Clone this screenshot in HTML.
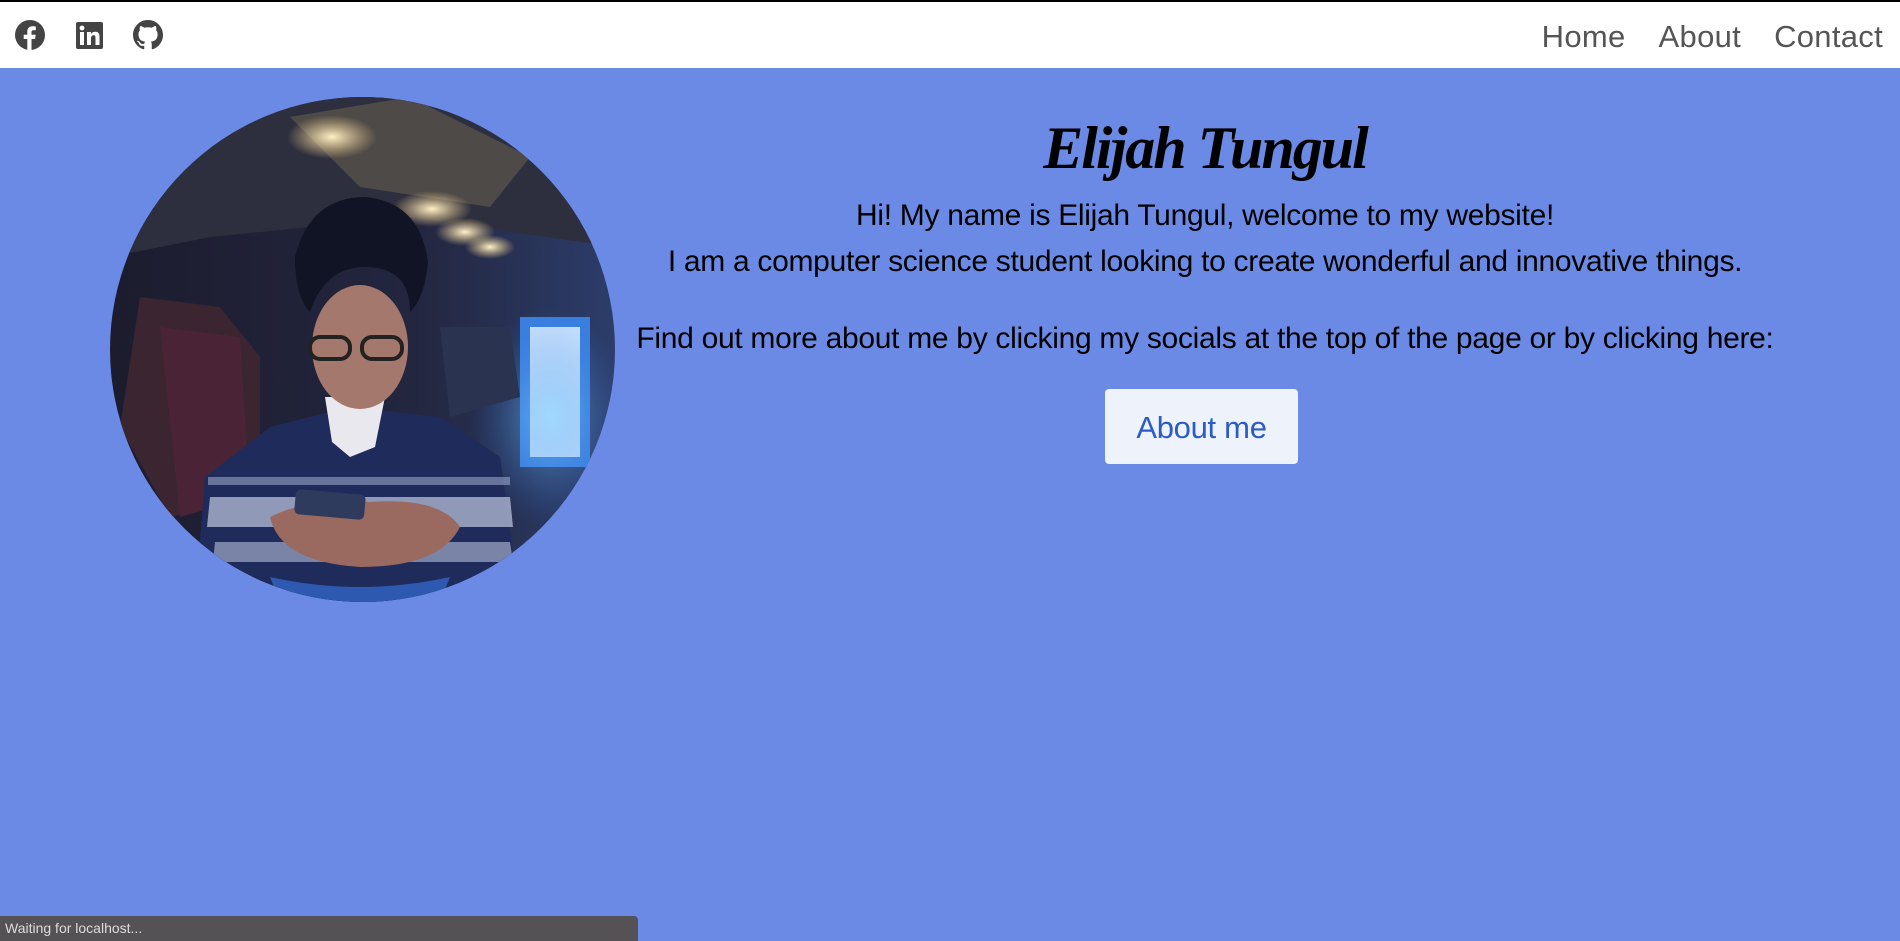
<!DOCTYPE html>
<html><head><meta charset="utf-8"><style>
*{margin:0;padding:0;box-sizing:border-box}
html,body{width:1900px;height:941px;overflow:hidden;background:#6a8ae6;font-family:"Liberation Sans",sans-serif}
.topline{position:absolute;left:0;top:0;width:1900px;height:2px;background:#000}
nav{position:absolute;left:0;top:2px;width:1900px;height:66px;background:#fff}
.ic{position:absolute;top:18px}
.links{position:absolute;right:17px;top:17px;font-size:31px;color:#555;letter-spacing:0.3px}
.links span{margin-left:33px}
.photo{position:absolute;left:110px;top:97px;width:505px;height:505px;border-radius:50%;overflow:hidden}
.t{position:absolute;left:620px;width:1170px;text-align:center;color:#000;white-space:nowrap}
h1{position:absolute;left:620px;width:1170px;text-align:center;top:114px;font-family:"Liberation Serif",serif;font-style:italic;font-weight:bold;font-size:60px;letter-spacing:-2px}
.p{font-size:30px;letter-spacing:-0.3px}
.btn{position:absolute;left:1105px;top:389px;width:193px;height:75px;background:#eef2fa;border-radius:4px;color:#2b5bc6;font-size:31px;text-align:center;line-height:78px;letter-spacing:-0.3px}
.status{position:absolute;left:0;top:916px;width:638px;height:25px;background:#545254;border-top-right-radius:4px;color:#ddd;font-size:14px;line-height:25px;padding-left:5px}
</style></head><body>
<div class="topline"></div>
<nav>
<svg class="ic" style="left:15px" width="30" height="30" viewBox="0 0 30 30"><circle cx="15" cy="15" r="15" fill="#444"/><path d="M16.5 30V19h3.6l.6-4.2h-4.2v-2.6c0-1.2.4-2 2.1-2h2.2V6.5c-.4 0-1.7-.2-3.2-.2-3.2 0-5.3 1.9-5.3 5.4v3.1H8.7V19h3.6v11z" fill="#fff"/></svg>
<svg class="ic" style="left:76px;top:20px" width="27" height="27" viewBox="0 0 27 27"><rect width="27" height="27" rx="2" fill="#444"/><rect x="4" y="10" width="4" height="13" fill="#fff"/><circle cx="6" cy="6" r="2.4" fill="#fff"/><path d="M11 10h4v2c.8-1.4 2.4-2.3 4.3-2.3 3.2 0 4.2 2 4.2 5V23h-4v-7c0-1.6-.4-2.7-1.9-2.7-1.6 0-2.6 1.1-2.6 2.9V23h-4z" fill="#fff"/></svg>
<svg class="ic" style="left:133px" width="30" height="30" viewBox="0 0 16 16"><path fill="#444" d="M8 0C3.58 0 0 3.58 0 8c0 3.54 2.29 6.53 5.47 7.59.4.07.55-.17.55-.38 0-.19-.01-.82-.01-1.49-2.01.37-2.53-.49-2.69-.94-.09-.23-.48-.94-.82-1.13-.28-.15-.68-.52-.01-.53.63-.01 1.08.58 1.23.82.72 1.21 1.87.87 2.33.66.07-.52.28-.87.51-1.07-1.78-.2-3.64-.89-3.64-3.95 0-.87.31-1.59.82-2.15-.08-.2-.36-1.02.08-2.12 0 0 .67-.21 2.2.82.64-.18 1.32-.27 2-.27.68 0 1.36.09 2 .27 1.53-1.04 2.2-.82 2.2-.82.44 1.1.16 1.92.08 2.12.51.56.82 1.27.82 2.15 0 3.07-1.87 3.75-3.65 3.95.29.25.54.73.54 1.48 0 1.07-.01 1.93-.01 2.2 0 .21.15.46.55.38A8.013 8.013 0 0016 8c0-4.42-3.58-8-8-8z"/></svg>
<div class="links"><span>Home</span><span>About</span><span>Contact</span></div>
</nav>
<div class="photo">
<svg width="505" height="505" viewBox="0 0 505 505">
<defs>
<linearGradient id="bg" x1="0" y1="0" x2="1" y2="0"><stop offset="0" stop-color="#1c1c2e"/><stop offset="0.6" stop-color="#23263f"/><stop offset="1" stop-color="#2c3d6a"/></linearGradient>
<radialGradient id="l1"><stop offset="0" stop-color="#fff2c8"/><stop offset="1" stop-color="#f0c880" stop-opacity="0"/></radialGradient>
<radialGradient id="bl"><stop offset="0" stop-color="#7fd0ff"/><stop offset="1" stop-color="#2a6ad0" stop-opacity="0"/></radialGradient>
</defs>
<rect width="505" height="505" fill="url(#bg)"/>
<path d="M0 0H505V150L300 120 100 140 0 160z" fill="#2e2f3e"/>
<path d="M180 20L300 0 420 60 380 110 250 90z" fill="#4d4a48"/>
<ellipse cx="222" cy="40" rx="45" ry="22" fill="url(#l1)"/>
<ellipse cx="322" cy="112" rx="40" ry="18" fill="url(#l1)"/>
<ellipse cx="355" cy="135" rx="30" ry="14" fill="url(#l1)"/>
<ellipse cx="380" cy="150" rx="25" ry="12" fill="url(#l1)"/>
<rect x="410" y="220" width="70" height="150" fill="#3a7fe0"/>
<rect x="420" y="230" width="50" height="130" fill="#cfe6ff"/>
<ellipse cx="440" cy="320" rx="80" ry="110" fill="url(#bl)" opacity="0.6"/>
<path d="M30 200L110 210 150 260 150 400 60 420 10 330z" fill="#3a2530"/>
<path d="M50 230L130 240 140 400 70 420z" fill="#4a2436"/>
<path d="M330 230L400 230 410 300 340 320z" fill="#2a3350"/>
<path d="M85 505L95 380 160 330 240 310 330 320 390 360 410 505z" fill="#1f2b5a"/>
<path d="M100 400L400 400 403 430 97 430z" fill="#b7bfd8" opacity="0.75"/>
<path d="M105 445L400 445 403 465 103 465z" fill="#b7bfd8" opacity="0.6"/>
<path d="M98 380L400 380 400 388 98 388z" fill="#9aa4c8" opacity="0.6"/>
<path d="M215 300L275 300 265 350 240 360 222 345z" fill="#e8e8ee"/>
<ellipse cx="250" cy="250" rx="48" ry="62" fill="#a5786e"/>
<path d="M185 160Q200 100 255 100 310 105 318 165 315 200 300 215 300 170 255 170 215 170 200 215 185 200 185 160z" fill="#111424"/>
<rect x="200" y="240" width="40" height="22" rx="10" fill="none" stroke="#222" stroke-width="4"/>
<rect x="252" y="240" width="40" height="22" rx="10" fill="none" stroke="#222" stroke-width="4"/>
<path d="M160 420Q200 400 260 405 330 400 350 430 330 470 250 470 170 465 160 420z" fill="#9a6a60"/>
<rect x="185" y="395" width="70" height="25" rx="5" fill="#2f3b5c" transform="rotate(5 220 407)"/>
<path d="M160 480Q250 500 340 480L330 505H170z" fill="#2d5ab0"/>
</svg>
</div>
<h1>Elijah Tungul</h1>
<div class="t p" style="top:199px">Hi! My name is Elijah Tungul, welcome to my website!</div>
<div class="t p" style="top:245px">I am a computer science student looking to create wonderful and innovative things.</div>
<div class="t p" style="top:322px">Find out more about me by clicking my socials at the top of the page or by clicking here:</div>
<div class="btn">About me</div>
<div class="status">Waiting for localhost...</div>
</body></html>
